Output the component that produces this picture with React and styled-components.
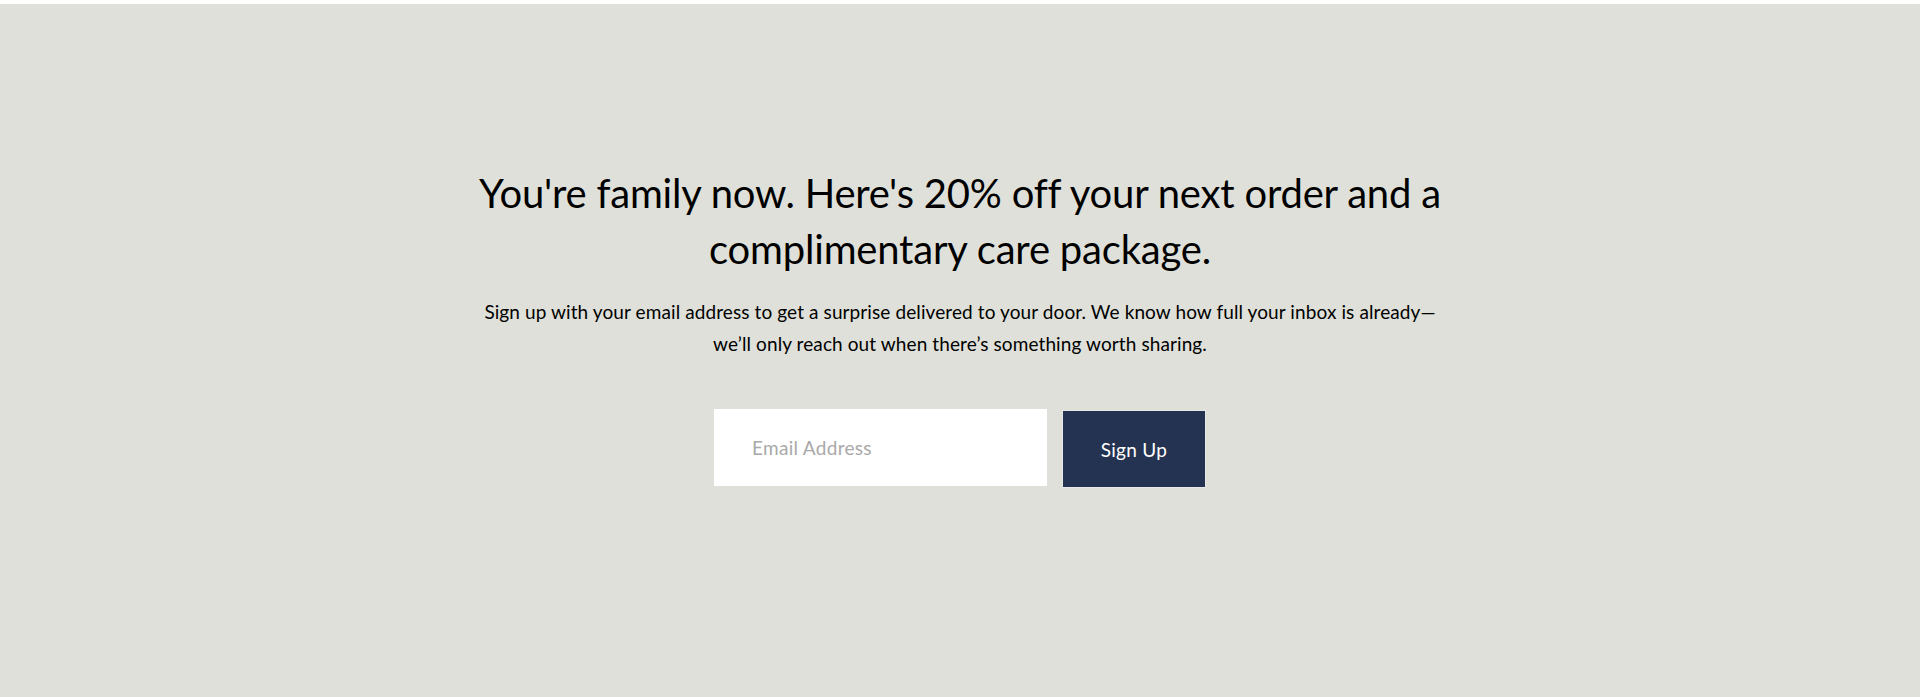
import React from 'react';
import styled, { createGlobalStyle } from 'styled-components';

const GlobalStyle = createGlobalStyle`
  html, body {
    margin: 0;
    padding: 0;
    background: #ffffff;
  }
  body {
    font-family: Lato, "Open Sans", sans-serif;
    -webkit-font-smoothing: antialiased;
  }
`;

function App() {
  return (
    <>
      <GlobalStyle />
      <Section>
        <Inner>
          <Heading>
            You're family now. Here's 20% off your next order and a complimentary care package.
          </Heading>
          <Blurb>
            Sign up with your email address to get a surprise delivered to your door. We know how full your inbox is{' '}
            <NoWrap>already—</NoWrap>we’ll only reach out when there’s something worth sharing.
          </Blurb>
          <Form onSubmit={(e) => e.preventDefault()}>
            <EmailInput type="email" placeholder="Email Address" />
            <SubmitButton type="submit">Sign Up</SubmitButton>
          </Form>
        </Inner>
      </Section>
    </>
  );
}

export default App;

const Section = styled.section`
  margin-top: 4px;
  height: 693px;
  box-sizing: border-box;
  background: #dfe0d9;
  padding-top: 161px;
  display: flex;
  justify-content: center;
`;

const Inner = styled.div`
  width: 980px;
  display: flex;
  flex-direction: column;
  align-items: center;
  text-align: center;
  color: #000;
`;

const Heading = styled.h2`
  margin: 0;
  font-size: 40px;
  font-weight: 400;
  line-height: 56px;
  letter-spacing: -0.2px;
`;

const Blurb = styled.p`
  margin: 19px 0 0;
  max-width: 970px;
  font-size: 19px;
  line-height: 32px;
  letter-spacing: 0.1px;
`;

const NoWrap = styled.span`
  white-space: nowrap;
`;

const Form = styled.form`
  margin-top: 49px;
  display: flex;
  align-items: flex-start;
  gap: 15px;
`;

const EmailInput = styled.input`
  width: 333px;
  height: 77px;
  box-sizing: border-box;
  border: none;
  outline: none;
  background: #fff;
  padding: 0 38px;
  font-family: Lato, "Open Sans", sans-serif;
  font-size: 19px;
  letter-spacing: 0.3px;
  color: #222;
  &::placeholder {
    color: #a9a9a9;
  }
`;

const SubmitButton = styled.button`
  width: 144px;
  height: 78px;
  margin-top: 1px;
  box-sizing: border-box;
  border: 1px solid #e8e9e4;
  background: #243352;
  color: #fff;
  font-family: Lato, "Open Sans", sans-serif;
  font-size: 19px;
  letter-spacing: 0.3px;
  cursor: pointer;
`;
